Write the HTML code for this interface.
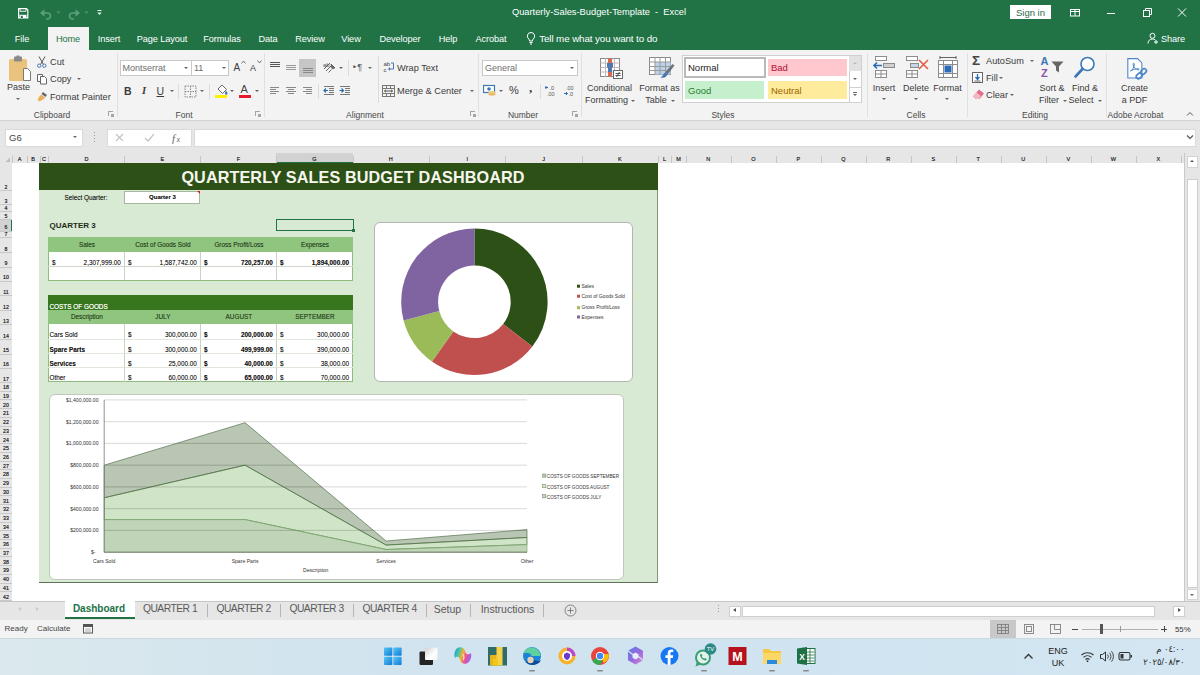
<!DOCTYPE html>
<html><head><meta charset="utf-8"><title>Quarterly-Sales-Budget-Template - Excel</title>
<style>
*{box-sizing:border-box;margin:0;padding:0}
html,body{width:1200px;height:675px;overflow:hidden;background:#fff}
body{font-family:"Liberation Sans","DejaVu Sans",sans-serif;font-size:9px;color:#444;position:relative}
#app{position:absolute;left:0;top:0;width:1200px;height:675px;overflow:hidden;background:#fff}
.abs{position:absolute}
.t{position:absolute;white-space:nowrap;line-height:1}
/* title */
#titlebar{left:0;top:0;width:1200px;height:50px;background:#217346}
.mtab{position:absolute;top:27.700px;height:23px;line-height:23px;color:#fff;font-size:9.2px;letter-spacing:-0.1px;white-space:nowrap;transform:translateX(-50%)}
#hometab{left:48px;top:27px;width:41px;height:24px;background:#f3f3f3}
/* ribbon */
#ribbon{left:0;top:50px;width:1200px;height:71px;background:#f3f3f3;border-bottom:1px solid #d2d2d2}
.rl{position:absolute;white-space:nowrap;font-size:9px;color:#3b3b3b;line-height:1}
.gl{position:absolute;white-space:nowrap;font-size:8.5px;color:#484848;line-height:1;top:110.600px;transform:translateX(-50%)}
.sep{position:absolute;top:53px;height:64px;width:1px;background:#e0e0e0}
/* formula bar */
#fbar{left:0;top:121px;width:1200px;height:32px;background:#e6e6e6}
/* headers */
#colhdr{left:0;top:153px;width:1184px;height:10px;background:#e6e6e6}
#rowhdr{left:0;top:163px;width:12px;height:438px;background:#e6e6e6}
.ch{position:absolute;top:155px;font-size:5.5px;color:#333;text-shadow:0 0 0.400px #444;line-height:8px;transform:translateX(-50%);white-space:nowrap}
.cd{position:absolute;top:156px;height:7px;width:1px;background:#c6c6c6}
.rh{position:absolute;left:0;width:12px;text-align:center;font-size:5.200px;color:#333;line-height:6px;text-shadow:0 0 0.400px #333}
/* bottom */
#tabsbar{left:0;top:601px;width:1200px;height:19px;background:#e6e6e6;border-top:1px solid #c6c6c6}
#status{left:0;top:620px;width:1200px;height:18px;background:#f3f3f3}
#taskbar{left:0;top:638px;width:1200px;height:37px;background:linear-gradient(90deg,#dbe9ec 0%,#d2e4ee 25%,#cfe3f0 60%,#d3e6f2 100%);border-top:1px solid #cbd8df}
.dd{position:absolute;width:0;height:0;border-left:2px solid transparent;border-right:2px solid transparent;border-top:2.500px solid #666}
.lau{position:absolute;top:111px;width:5px;height:5px;border-left:1px solid #a5a5a5;border-top:1px solid #a5a5a5}
.lau:after{content:"";position:absolute;left:2px;top:2px;width:3px;height:3px;background:#a5a5a5}
.box{position:absolute;background:#fff;border:1px solid #c8c8c8}
.sep2{position:absolute;top:84px;height:15px;width:1px;background:#dcdcdc}
.dt{font-size:6.400px;color:#1a1a1a;text-shadow:0 0 0.500px rgba(0,0,0,0.450)}
.tb{position:absolute;white-space:nowrap;line-height:1;font-size:10.500px;color:#5a5a5a;transform:translateX(-50%)}
.tsep{position:absolute;top:604px;width:1px;height:13px;background:#b5b5b5}
</style></head><body><div id="app">

<!-- TITLE BAR -->
<div id="titlebar" class="abs"></div>
<div id="hometab" class="abs"></div>
<!-- quick access -->
<svg class="abs" style="left:14px;top:5px" width="100" height="16" viewBox="0 0 100 16">
  <path d="M4.600 3.600h7.800l1.400 1.400v7.900h-9.200z" fill="none" stroke="#fff" stroke-width="1.200"/>
  <rect x="5.500" y="9.800" width="7" height="3.200" fill="#fff"/><rect x="6.800" y="10.800" width="2" height="2.200" fill="#217346"/>
  <path d="M6 3.500v2.800h6v-2.800" fill="none" stroke="#fff" stroke-width="0.900"/>
  <g fill="none" stroke="#5c9e7c" stroke-width="1.600">
    <path d="M27.500 8h6a3 3 0 0 1 0 6h-1.500"/>
    <path d="M64.500 8h-6a3 3 0 0 0 0 6h1.500"/>
  </g>
  <path d="M26 8l4.500-3.800v7.600z M66 8l-4.500-3.800v7.600z" fill="#5c9e7c"/>
  <path d="M42.500 6.500h4l-2 2.200z M70.500 6.500h4l-2 2.200z" fill="#4f9671"/>
  <path d="M83.500 5.500h4" stroke="#e6f2ea" stroke-width="1"/><path d="M83.300 7.500h4.400l-2.200 2.500z" fill="#e6f2ea"/>
</svg>
<div class="t" style="left:599px;top:8px;transform:translateX(-50%);color:#fff;font-size:9.300px">Quarterly-Sales-Budget-Template &nbsp;-&nbsp; Excel</div>
<div class="abs" style="left:1010px;top:5px;width:41px;height:14px;background:#fff"></div>
<div class="t" style="left:1030.500px;top:7.500px;transform:translateX(-50%);color:#2b6b4a;font-size:9.500px">Sign in</div>
<svg class="abs" style="left:1060px;top:4px" width="140" height="18" viewBox="0 0 140 18">
  <g fill="none" stroke="#fff" stroke-width="1">
    <rect x="10.500" y="5.500" width="9" height="6.500"/><path d="M15 5.500v6.500"/><path d="M10.500 7.500h9"/>
    <path d="M47 9.500h8"/>
    <rect x="83.500" y="6.500" width="6" height="6"/><path d="M85.500 6.500v-2h6v6h-2"/>
    <path d="M118 4.500l8 8M126 4.500l-8 8"/>
  </g>
</svg>
<div class="mtab" style="left:22px">File</div>
<div class="mtab" style="left:68px;color:#217346">Home</div>
<div class="mtab" style="left:109px">Insert</div>
<div class="mtab" style="left:162px">Page Layout</div>
<div class="mtab" style="left:222px">Formulas</div>
<div class="mtab" style="left:268px">Data</div>
<div class="mtab" style="left:310px">Review</div>
<div class="mtab" style="left:351px">View</div>
<div class="mtab" style="left:400px">Developer</div>
<div class="mtab" style="left:448px">Help</div>
<div class="mtab" style="left:491px">Acrobat</div>
<svg class="abs" style="left:525px;top:31px" width="12" height="15" viewBox="0 0 12 15"><g fill="none" stroke="#fff" stroke-width="1"><path d="M6 1.500a3.600 3.600 0 0 1 2.200 6.500c-.6.600-.7 1.200-.7 2h-3c0-.8-.1-1.400-.7-2a3.600 3.600 0 0 1 2.200-6.500z"/><path d="M4.500 11.500h3M5 13h2"/></g></svg>
<div class="mtab" style="left:598.300px;top:27.400px;font-size:9.800px">Tell me what you want to do</div>
<svg class="abs" style="left:1147px;top:32px" width="12" height="13" viewBox="0 0 12 13"><g fill="none" stroke="#fff" stroke-width="1"><circle cx="5.500" cy="3.800" r="2.500"/><path d="M1 11.500c0-3 2-4.500 4.500-4.500 1 0 2 .3 2.700.9"/><path d="M7 10h4M9 8v4"/></g></svg>
<div class="mtab" style="left:1173px">Share</div>

<!-- RIBBON -->
<div id="ribbon" class="abs"></div>
<!-- Clipboard -->
<svg class="abs" style="left:6px;top:54.500px" width="28" height="30" viewBox="0 0 28 30">
  <rect x="3" y="4" width="18" height="22" rx="1.500" fill="#e9c27c"/>
  <rect x="8" y="1.500" width="8" height="5" rx="1" fill="#8a8a8a"/><rect x="10.500" y="0.500" width="3" height="2.500" fill="#8a8a8a"/>
  <path d="M17.500 13.500h4l3 3v9h-7z" fill="#fff" stroke="#7a7a7a" stroke-width="1"/>
</svg>
<div class="rl" style="left:18.500px;top:83px;transform:translateX(-50%);font-size:9px">Paste</div>
<div class="dd" style="left:16px;top:98px"></div>
<svg class="abs" style="left:36px;top:56px" width="12" height="12" viewBox="0 0 12 12"><g fill="none" stroke="#555" stroke-width="1"><path d="M3 0.500l4.500 8M9 0.500l-4.500 8"/><circle cx="3.200" cy="9.700" r="1.700" stroke="#4a7ab5"/><circle cx="8.300" cy="9.700" r="1.700" stroke="#4a7ab5"/></g></svg>
<div class="rl" style="left:50px;top:57.700px;font-size:9.200px">Cut</div>
<svg class="abs" style="left:36px;top:73px" width="12" height="12" viewBox="0 0 12 12"><g fill="#fff" stroke="#666" stroke-width="1"><path d="M1.500 1.500h5v7h-5z"/><path d="M4.500 3.500h4l2 2v5.500h-6z"/></g></svg>
<div class="rl" style="left:50px;top:75px;font-size:9.200px">Copy</div>
<div class="dd" style="left:77px;top:78px"></div>
<svg class="abs" style="left:36px;top:91px" width="13" height="12" viewBox="0 0 13 12"><path d="M7 1l4 3-1.500 2-4-3z" fill="#666"/><path d="M5 3.500l4 3-1 1.500-4.500 2.500-2-1.500 1.500-3z" fill="#e9b35e"/></svg>
<div class="rl" style="left:50px;top:93px;font-size:9.200px">Format Painter</div>
<div class="gl" style="left:52px">Clipboard</div>
<div class="lau" style="left:108px"></div>
<div class="sep" style="left:117px"></div>
<!-- Font -->
<div class="box" style="left:120px;top:60px;width:72px;height:16px"></div>
<div class="box" style="left:191px;top:60px;width:38px;height:16px"></div>
<div class="rl" style="left:122.500px;top:64px;color:#6e6e6e">Montserrat</div>
<div class="rl" style="left:194px;top:64px;color:#6e6e6e">11</div>
<div class="dd" style="left:184px;top:67px"></div><div class="dd" style="left:222px;top:67px"></div>
<div class="rl" style="left:233.500px;top:63px;font-size:10px">A</div><svg class="abs" style="left:241px;top:60px" width="5" height="4"><path d="M0.500 3.500l2-2.500 2 2.500" fill="none" stroke="#555" stroke-width="0.800"/></svg>
<div class="rl" style="left:250px;top:64px;font-size:9px">A</div><svg class="abs" style="left:257px;top:60px" width="5" height="4"><path d="M0.500 0.500l2 2.500 2-2.500" fill="none" stroke="#555" stroke-width="0.800"/></svg>
<div class="rl" style="left:124px;top:86px;font-size:10.500px;font-weight:bold">B</div>
<div class="rl" style="left:142px;top:86px;font-size:10.500px;font-style:italic;font-weight:bold;font-family:'Liberation Serif',serif">I</div>
<div class="rl" style="left:156.500px;top:86px;font-size:10.500px;text-decoration:underline">U</div>
<div class="dd" style="left:170px;top:90px"></div>
<div class="sep2" style="left:178px"></div>
<svg class="abs" style="left:184px;top:85px" width="13" height="13" viewBox="0 0 13 13"><g fill="none" stroke="#888" stroke-width="1" stroke-dasharray="1.500 1"><rect x="1" y="1" width="11" height="11"/><path d="M6.500 1v11M1 6.500h11"/></g></svg>
<div class="dd" style="left:200px;top:90px"></div>
<div class="sep2" style="left:209px"></div>
<svg class="abs" style="left:214px;top:83px" width="15" height="16" viewBox="0 0 15 16"><path d="M4 6l4-4 4.500 4.500-4 4z" fill="#fff" stroke="#666" stroke-width="1"/><path d="M12 7.500c1 1.500 1.500 2.300 1.500 3a1.300 1.300 0 0 1-2.600 0c0-.7.400-1.500 1.100-3z" fill="#4a7ab5"/><rect x="1" y="12" width="12" height="3" fill="#ffef00"/></svg>
<div class="dd" style="left:230px;top:90px"></div>
<div class="rl" style="left:240.500px;top:84px;font-size:11px;color:#444">A</div>
<div class="abs" style="left:239px;top:95px;width:12px;height:3px;background:#e8192c"></div>
<div class="dd" style="left:255px;top:90px"></div>
<div class="gl" style="left:184px">Font</div>
<div class="lau" style="left:255px"></div>
<div class="sep" style="left:264px"></div>

<!-- Alignment -->
<div class="abs" style="left:299px;top:59px;width:17px;height:18px;background:#c6c6c6"></div>
<div class="abs" style="left:270px;top:62px;width:10px;height:1px;background:#555"></div><div class="abs" style="left:270px;top:64px;width:10px;height:1px;background:#555"></div><div class="abs" style="left:270px;top:66px;width:10px;height:1px;background:#555"></div>
<div class="abs" style="left:286px;top:65px;width:10px;height:1px;background:#999"></div><div class="abs" style="left:286px;top:67px;width:10px;height:1px;background:#999"></div><div class="abs" style="left:286px;top:69px;width:10px;height:1px;background:#999"></div>
<div class="abs" style="left:303px;top:68px;width:10px;height:1px;background:#888"></div><div class="abs" style="left:303px;top:70px;width:10px;height:1px;background:#888"></div><div class="abs" style="left:303px;top:72px;width:10px;height:1px;background:#888"></div>
<svg class="abs" style="left:322.500px;top:60px" width="14" height="14" viewBox="0 0 14 14"><g fill="none" stroke="#666" stroke-width="1"><path d="M1 9l6-6"/><path d="M3 11l6-6"/><path d="M5.500 12.500l3-3"/><path d="M8 4l4 4-3 .5z" fill="#666"/></g><text x="0" y="7" font-size="6" font-family="Liberation Sans, sans-serif" fill="#555">ab</text></svg>
<div class="dd" style="left:338.500px;top:67px"></div><div class="abs" style="left:348px;top:60px;width:1px;height:16px;background:#dcdcdc"></div>
<div class="rl" style="left:352px;top:63px;font-size:9px;color:#555">&#8227;&#182;</div><div class="dd" style="left:368px;top:67px"></div>
<div class="abs" style="left:378px;top:56px;width:1px;height:47px;background:#dcdcdc"></div>
<svg class="abs" style="left:383px;top:60px" width="13" height="14" viewBox="0 0 13 14"><text x="0.500" y="5.500" font-size="6" font-family="Liberation Sans, sans-serif" fill="#444">ab</text><text x="0.500" y="12" font-size="6" font-family="Liberation Sans, sans-serif" fill="#444">c</text><path d="M8 3h2.500v6h-4.500" fill="none" stroke="#4a7ab5" stroke-width="1"/><path d="M7 7l-2 2 2 2z" fill="#4a7ab5"/></svg>
<div class="rl" style="left:397px;top:63.500px;font-size:9.200px">Wrap Text</div>
<div class="abs" style="left:270px;top:87px;width:9px;height:1px;background:#888"></div><div class="abs" style="left:270px;top:89px;width:6px;height:1px;background:#888"></div><div class="abs" style="left:270px;top:91px;width:9px;height:1px;background:#888"></div><div class="abs" style="left:270px;top:93px;width:6px;height:1px;background:#888"></div>
<div class="abs" style="left:286px;top:87px;width:10px;height:1px;background:#888"></div><div class="abs" style="left:288px;top:89px;width:6px;height:1px;background:#888"></div><div class="abs" style="left:286px;top:91px;width:10px;height:1px;background:#888"></div><div class="abs" style="left:288px;top:93px;width:6px;height:1px;background:#888"></div>
<div class="abs" style="left:303px;top:87px;width:9px;height:1px;background:#888"></div><div class="abs" style="left:306px;top:89px;width:6px;height:1px;background:#888"></div><div class="abs" style="left:303px;top:91px;width:9px;height:1px;background:#888"></div><div class="abs" style="left:306px;top:93px;width:6px;height:1px;background:#888"></div>
<div class="sep2" style="left:318px"></div>
<svg class="abs" style="left:323px;top:85px" width="30" height="12" viewBox="0 0 30 12"><g stroke="#777" stroke-width="1"><path d="M1 1.500h10M6 3.500h5M6 5.500h5M6 7.500h5M1 9.500h10"/><path d="M17 1.500h10M22 3.500h5M22 5.500h5M22 7.500h5M17 9.500h10"/></g><path d="M5 5.500h-4M3 3.500l-2 2 2 2" stroke="#2b6cb8" stroke-width="1.200" fill="none"/><path d="M16.500 5.500h4M18.500 3.500l2 2-2 2" stroke="#2b6cb8" stroke-width="1.200" fill="none"/></svg>
<svg class="abs" style="left:382px;top:84px" width="13" height="14" viewBox="0 0 13 14"><g fill="none" stroke="#777" stroke-width="1"><rect x="0.500" y="1.500" width="12" height="11"/><path d="M0.500 4.500h12M0.500 9.500h12M4.500 1.500v3M8.500 1.500v3M4.500 9.500v3M8.500 9.500v3"/><path d="M2.500 7h8M4 5.800l-1.500 1.200 1.500 1.200M9 5.800l1.500 1.200-1.500 1.200" stroke="#555"/></g></svg>
<div class="rl" style="left:397px;top:86.500px;font-size:9.200px">Merge &amp; Center</div><div class="dd" style="left:470px;top:90px"></div>
<div class="gl" style="left:365px">Alignment</div><div class="lau" style="left:470px"></div><div class="sep" style="left:478px"></div>
<!-- Number -->
<div class="box" style="left:482px;top:60px;width:96px;height:16px"></div><div class="rl" style="left:485px;top:64px;color:#6e6e6e">General</div><div class="dd" style="left:570px;top:67px"></div>
<svg class="abs" style="left:483px;top:84px" width="14" height="13" viewBox="0 0 14 13"><rect x="0.500" y="1.500" width="11" height="7" fill="#fff" stroke="#3c78b4" stroke-width="1.200"/><circle cx="6" cy="5" r="1.800" fill="#3c78b4"/><ellipse cx="9" cy="10" rx="3.500" ry="1.500" fill="#e9b35e"/><ellipse cx="9" cy="8.500" rx="3.500" ry="1.500" fill="#f0c878"/></svg>
<div class="dd" style="left:499px;top:90px"></div><div class="rl" style="left:509px;top:85px;font-size:11px">%</div><div class="rl" style="left:529px;top:81px;font-size:13px;font-weight:bold;font-family:'Liberation Serif',serif">,</div>
<div class="sep2" style="left:540px"></div>
<svg class="abs" style="left:545px;top:84px" width="32" height="14" viewBox="0 0 32 14"><g font-family="Liberation Sans, sans-serif" font-size="5.500" fill="#555"><text x="4.500" y="5.500">.0</text><text x="2" y="11.500">.00</text><text x="21" y="5.500">.00</text><text x="23.500" y="11.500">.0</text></g><path d="M0 3.500h3M1.500 2l-1.500 1.500 1.500 1.500" stroke="#2b6cb8" fill="none"/><path d="M19 9.500h3.500M21 8l1.500 1.500-1.500 1.500" stroke="#2b6cb8" fill="none"/></svg>
<div class="gl" style="left:523px">Number</div><div class="lau" style="left:572px"></div><div class="sep" style="left:581px"></div>
<!-- STYLES -->
<svg class="abs" style="left:599.500px;top:57.500px" width="24" height="22" viewBox="0 0 24 22">
  <rect x="0.500" y="0.500" width="19" height="18" fill="#fff" stroke="#8a8a8a"/>
  <path d="M0.500 5h19M0.500 9.500h19M0.500 14h19M5.500 0.500v18M14.500 0.500v18" stroke="#c4b8b8" fill="none"/>
  <rect x="8" y="0.500" width="4" height="18" fill="#d9694a"/><rect x="7" y="5" width="6" height="4.500" fill="#4a7ab5"/><rect x="8" y="9.500" width="4" height="4.500" fill="#4a7ab5"/>
  <rect x="13.500" y="12.500" width="9" height="8" fill="#fff" stroke="#666"/><path d="M15.500 15.500h5M15.500 17.500h5M19.500 14l-3 5" stroke="#444" stroke-width="0.900" fill="none"/>
</svg>
<div class="rl" style="left:609.500px;top:83.500px;transform:translateX(-50%)">Conditional</div>
<div class="rl" style="left:606.500px;top:96px;transform:translateX(-50%)">Formatting</div><div class="dd" style="left:631px;top:100px"></div>
<svg class="abs" style="left:648.500px;top:57px" width="26" height="23" viewBox="0 0 26 23">
  <rect x="0.500" y="0.500" width="21" height="17" fill="#fff" stroke="#8a8a8a"/>
  <rect x="6" y="5" width="15.500" height="12.500" fill="#bcd2ea"/>
  <path d="M0.500 5h21M0.500 9.500h21M0.500 13.500h21M6 0.500v17M11 0.500v17M16.500 0.500v17" stroke="#9a9a9a" fill="none"/>
  <path d="M23.500 7l2 1.500-7 9-2.500-2z" fill="#6a7480"/><path d="M16 15.500l2.500 2c-1 2.500-4 4-7 3 2-1 2.500-3 4.500-5z" fill="#3c78b4"/>
</svg>
<div class="rl" style="left:659.500px;top:83.500px;transform:translateX(-50%)">Format as</div>
<div class="rl" style="left:656px;top:96px;transform:translateX(-50%)">Table</div><div class="dd" style="left:671px;top:100px"></div>
<div class="abs" style="left:682px;top:55px;width:180px;height:48px;background:#fff;border:1px solid #d0d0d0"></div>
<div class="abs" style="left:684px;top:57px;width:82px;height:21px;background:#fff;border:2px solid #b9b9b9"></div>
<div class="abs" style="left:768px;top:59px;width:79px;height:17px;background:#ffc7ce"></div>
<div class="abs" style="left:685px;top:81px;width:79px;height:18px;background:#c6efce"></div>
<div class="abs" style="left:768px;top:81px;width:79px;height:18px;background:#ffeb9c"></div>
<div class="rl" style="left:688px;top:63px;font-size:9.500px;color:#222">Normal</div>
<div class="rl" style="left:771px;top:63px;font-size:9.500px;color:#b01030">Bad</div>
<div class="rl" style="left:688px;top:85.500px;font-size:9.500px;color:#2a7d32">Good</div>
<div class="rl" style="left:771px;top:85.500px;font-size:9.500px;color:#9c6500">Neutral</div>
<div class="abs" style="left:849px;top:56px;width:12px;height:15px;background:#e1e1e1"></div>
<div class="abs" style="left:849px;top:71px;width:12px;height:31px;border-left:1px solid #d0d0d0"></div>
<div class="abs" style="left:849px;top:87px;width:12px;height:1px;background:#d0d0d0"></div>
<div class="dd" style="left:853px;top:62px;border-top:none;border-bottom:2.500px solid #bbb"></div>
<div class="dd" style="left:853px;top:78px"></div>
<div class="abs" style="left:853px;top:92px;width:4px;height:1px;background:#666"></div><div class="dd" style="left:853px;top:94px"></div>
<div class="gl" style="left:723px">Styles</div><div class="sep" style="left:867px"></div>
<!-- CELLS -->
<svg class="abs" style="left:872px;top:55px" width="90" height="24" viewBox="0 0 90 24">
  <g fill="#fff" stroke="#8c8c8c" stroke-width="1">
    <rect x="3.500" y="1.500" width="11" height="4"/><rect x="11.500" y="8.500" width="11" height="4" fill="#d0d0d0"/><rect x="3.500" y="15.500" width="11" height="7"/><path d="M9 15.500v7M3.500 19h11"/>
    <rect x="34.500" y="1.500" width="11" height="4"/><rect x="38.500" y="8.500" width="8" height="4" fill="#c5d5e8"/><rect x="34.500" y="15.500" width="11" height="7"/><path d="M40 15.500v7M34.500 19h11"/>
    <rect x="66.500" y="5.500" width="19" height="17"/><path d="M66.500 9.500h19M66.500 18.500h19M71.500 5.500v17M80.500 5.500v17"/>
  </g>
  <rect x="72.500" y="10.500" width="7" height="7" fill="#2b6cb8"/>
  <path d="M68 2.500h16M68 1v3M84 1v3" stroke="#555" fill="none" stroke-width="0.900"/>
  <path d="M10 10.500h-8M5 7.500l-3 3 3 3" stroke="#2b6cb8" stroke-width="1.600" fill="none"/>
  <path d="M47 5l9 9M56 5l-9 9" stroke="#e2583e" stroke-width="1.500" fill="none"/>
</svg>
<div class="rl" style="left:884px;top:83.600px;transform:translateX(-50%)">Insert</div>
<div class="rl" style="left:916px;top:83.600px;transform:translateX(-50%)">Delete</div>
<div class="rl" style="left:947.500px;top:83.600px;transform:translateX(-50%)">Format</div>
<div class="dd" style="left:882px;top:98px"></div><div class="dd" style="left:914px;top:98px"></div><div class="dd" style="left:945px;top:98px"></div>
<div class="gl" style="left:916px">Cells</div><div class="sep" style="left:967px"></div>
<!-- EDITING -->
<div class="rl" style="left:972px;top:54px;font-size:13.500px;font-weight:bold;color:#444">&#931;</div>
<div class="rl" style="left:986px;top:57px;font-size:9.200px">AutoSum</div><div class="dd" style="left:1030px;top:60px"></div>
<svg class="abs" style="left:972px;top:72px" width="12" height="12" viewBox="0 0 12 12"><rect x="0.500" y="0.500" width="10" height="10" fill="#fff" stroke="#666"/><path d="M5.500 2v5M3.500 5l2 2.500 2-2.500" stroke="#2b6cb8" stroke-width="1.300" fill="none"/><path d="M2.500 9h6" stroke="#666"/></svg>
<div class="rl" style="left:986px;top:73.500px;font-size:9.200px">Fill</div><div class="dd" style="left:999px;top:77px"></div>
<svg class="abs" style="left:972px;top:89px" width="13" height="11" viewBox="0 0 13 11"><path d="M7 0.500l5 4-4.500 5.500h-3.500l-3-2.500z" fill="#e46c88"/><path d="M1 7.500l3.500-4 4.500 3.500-2 3h-3z" fill="#f4b8c5"/></svg>
<div class="rl" style="left:986px;top:90.500px;font-size:9.200px">Clear</div><div class="dd" style="left:1010px;top:94px"></div>
<svg class="abs" style="left:1039px;top:55px" width="28" height="24" viewBox="0 0 28 24"><text x="1.500" y="10" font-size="11" font-weight="bold" font-family="Liberation Sans, sans-serif" fill="#3c78b4">A</text><text x="2" y="21.500" font-size="11" font-weight="bold" font-family="Liberation Sans, sans-serif" fill="#8a55a8">Z</text><path d="M12.500 6.500h12l-4.500 5v6l-3 -2v-4z" fill="#666"/></svg>
<div class="rl" style="left:1052px;top:83.600px;transform:translateX(-50%)">Sort &amp;</div>
<div class="rl" style="left:1049px;top:96px;transform:translateX(-50%)">Filter</div><div class="dd" style="left:1063px;top:100px"></div>
<svg class="abs" style="left:1072px;top:55px" width="26" height="24" viewBox="0 0 26 24"><circle cx="15.500" cy="9" r="6.500" fill="#fff" stroke="#3c78b4" stroke-width="1.600"/><path d="M10.500 14l-7 7.500" stroke="#3c78b4" stroke-width="2.600" stroke-linecap="round"/></svg>
<div class="rl" style="left:1085px;top:83.600px;transform:translateX(-50%)">Find &amp;</div>
<div class="rl" style="left:1081px;top:96px;transform:translateX(-50%)">Select</div><div class="dd" style="left:1098px;top:100px"></div>
<div class="gl" style="left:1035px">Editing</div><div class="sep" style="left:1106px"></div>
<!-- ADOBE -->
<svg class="abs" style="left:1124px;top:56.500px" width="26" height="27" viewBox="0 0 24 25"><path d="M3.500 1.500h9l4 4v14h-13z" fill="#fff" stroke="#4a86c8" stroke-width="1"/><path d="M6 13c2-1 3.500-4 3.500-6.500 0-1-1.200-1-1.200 0 0 2.500 2.500 5.500 5 5.500 1 0 1-1.200 0-1.200-2.500 0-5.500 1-7.300 2.200z" fill="none" stroke="#4a86c8" stroke-width="0.900"/><g fill="none" stroke="#4a86c8" stroke-width="1.500"><rect x="11" y="15.500" width="6" height="4" rx="2" transform="rotate(-45 14 17.500)"/><rect x="15" y="11.500" width="6" height="4" rx="2" transform="rotate(-45 18 13.500)"/></g></svg>
<div class="rl" style="left:1134.500px;top:83.600px;transform:translateX(-50%)">Create</div>
<div class="rl" style="left:1134.500px;top:96px;transform:translateX(-50%)">a PDF</div>
<div class="gl" style="left:1135.500px">Adobe Acrobat</div>
<svg class="abs" style="left:1186px;top:111px" width="8" height="6"><path d="M1 4.500l3-3 3 3" fill="none" stroke="#555" stroke-width="1"/></svg>
<!-- FORMULA BAR -->
<div id="fbar" class="abs"></div>
<div class="abs" style="left:4.500px;top:128.500px;width:78.500px;height:18px;background:#fff;border:1px solid #dadada"></div>
<div class="rl" style="left:9px;top:133px;font-size:9.500px;color:#444">G6</div>
<div class="dd" style="left:73px;top:136px"></div>
<div class="abs" style="left:94px;top:132px;width:1px;height:1px;background:#999;box-shadow:0 3px 0 #999,0 6px 0 #999,0 9px 0 #999"></div>
<div class="abs" style="left:106.500px;top:128.500px;width:85px;height:18px;background:#fff;border:1px solid #dadada"></div>
<svg class="abs" style="left:112px;top:131px" width="76" height="14" viewBox="0 0 76 14"><path d="M4 3l7 7M11 3l-7 7" stroke="#c4c4c4" stroke-width="1.200" fill="none"/><path d="M33 7l3 3 6-7" stroke="#c4c4c4" stroke-width="1.200" fill="none"/><text x="60" y="10.500" font-size="11" font-style="italic" font-family="Liberation Serif, serif" fill="#666">f</text><text x="64.500" y="11" font-size="8" font-style="italic" font-family="Liberation Serif, serif" fill="#666">x</text></svg>
<div class="abs" style="left:194px;top:128.500px;width:1002px;height:18px;background:#fff;border:1px solid #dadada"></div>
<svg class="abs" style="left:1186px;top:134px" width="8" height="6"><path d="M1 1.500l3 3 3-3" fill="none" stroke="#555" stroke-width="1.200"/></svg>

<!-- HEADERS -->
<div id="colhdr" class="abs"></div>
<div class="abs" style="left:276px;top:153px;width:77px;height:10px;background:#d2d2d2;border-bottom:1px solid #217346"></div>
<svg class="abs" style="left:5px;top:157px" width="6" height="6"><path d="M5 0.500v4.500h-4.500z" fill="#bdbdbd"/></svg>
<div class="ch" style="left:19.7px">A</div><div class="cd" style="left:27.0px"></div><div class="ch" style="left:33.2px">B</div><div class="cd" style="left:39.5px"></div><div class="ch" style="left:44.0px">C</div><div class="cd" style="left:48.4px"></div><div class="ch" style="left:86.4px">D</div><div class="cd" style="left:124.4px"></div><div class="ch" style="left:162.4px">E</div><div class="cd" style="left:200.4px"></div><div class="ch" style="left:238.4px">F</div><div class="cd" style="left:276.4px"></div><div class="ch" style="left:314.5px">G</div><div class="cd" style="left:352.6px"></div><div class="ch" style="left:390.8px">H</div><div class="cd" style="left:429.0px"></div><div class="ch" style="left:467.2px">I</div><div class="cd" style="left:505.4px"></div><div class="ch" style="left:543.6px">J</div><div class="cd" style="left:581.8px"></div><div class="ch" style="left:619.8px">K</div><div class="cd" style="left:657.8px"></div><div class="ch" style="left:664.5px">L</div><div class="cd" style="left:671.2px"></div><div class="ch" style="left:678.5px">M</div><div class="cd" style="left:685.8px"></div><div class="ch" style="left:708.3px">N</div><div class="cd" style="left:730.8px"></div><div class="ch" style="left:753.3px">O</div><div class="cd" style="left:775.8px"></div><div class="ch" style="left:798.3px">P</div><div class="cd" style="left:820.8px"></div><div class="ch" style="left:843.3px">Q</div><div class="cd" style="left:865.8px"></div><div class="ch" style="left:888.3px">R</div><div class="cd" style="left:910.8px"></div><div class="ch" style="left:933.3px">S</div><div class="cd" style="left:955.8px"></div><div class="ch" style="left:978.3px">T</div><div class="cd" style="left:1000.8px"></div><div class="ch" style="left:1023.3px">U</div><div class="cd" style="left:1045.8px"></div><div class="ch" style="left:1068.3px">V</div><div class="cd" style="left:1090.8px"></div><div class="ch" style="left:1113.3px">W</div><div class="cd" style="left:1135.8px"></div><div class="ch" style="left:1158.3px">X</div><div class="cd" style="left:1180.8px"></div><div class="cd" style="left:12px"></div>
<div id="rowhdr" class="abs"></div>
<div class="abs" style="left:0;top:219px;width:12px;height:12px;background:#d2d2d2;border-right:1px solid #217346"></div>
<div class="rh" style="top:183.5px">2</div><div class="abs" style="left:0;top:190.0px;width:12px;height:1px;background:#c8c8c8"></div><div class="rh" style="top:197.5px">3</div><div class="abs" style="left:0;top:204.0px;width:12px;height:1px;background:#c8c8c8"></div><div class="rh" style="top:204.5px">4</div><div class="abs" style="left:0;top:211.0px;width:12px;height:1px;background:#c8c8c8"></div><div class="rh" style="top:212.8px">5</div><div class="abs" style="left:0;top:219.3px;width:12px;height:1px;background:#c8c8c8"></div><div class="rh" style="top:224.2px">6</div><div class="abs" style="left:0;top:230.7px;width:12px;height:1px;background:#c8c8c8"></div><div class="rh" style="top:230.5px">7</div><div class="abs" style="left:0;top:237.0px;width:12px;height:1px;background:#c8c8c8"></div><div class="rh" style="top:245.9px">8</div><div class="abs" style="left:0;top:252.4px;width:12px;height:1px;background:#c8c8c8"></div><div class="rh" style="top:260.1px">9</div><div class="abs" style="left:0;top:266.6px;width:12px;height:1px;background:#c8c8c8"></div><div class="rh" style="top:274.1px">10</div><div class="abs" style="left:0;top:280.6px;width:12px;height:1px;background:#c8c8c8"></div><div class="rh" style="top:288.5px">11</div><div class="abs" style="left:0;top:295.0px;width:12px;height:1px;background:#c8c8c8"></div><div class="rh" style="top:303.5px">12</div><div class="abs" style="left:0;top:310.0px;width:12px;height:1px;background:#c8c8c8"></div><div class="rh" style="top:317.7px">13</div><div class="abs" style="left:0;top:324.2px;width:12px;height:1px;background:#c8c8c8"></div><div class="rh" style="top:332.5px">14</div><div class="abs" style="left:0;top:339.0px;width:12px;height:1px;background:#c8c8c8"></div><div class="rh" style="top:347.0px">15</div><div class="abs" style="left:0;top:353.5px;width:12px;height:1px;background:#c8c8c8"></div><div class="rh" style="top:361.1px">16</div><div class="abs" style="left:0;top:367.6px;width:12px;height:1px;background:#c8c8c8"></div><div class="rh" style="top:375.5px">17</div><div class="abs" style="left:0;top:382.0px;width:12px;height:1px;background:#c8c8c8"></div><div class="rh" style="top:384.2px">18</div><div class="abs" style="left:0;top:390.7px;width:12px;height:1px;background:#c8c8c8"></div><div class="rh" style="top:392.9px">19</div><div class="abs" style="left:0;top:399.4px;width:12px;height:1px;background:#c8c8c8"></div><div class="rh" style="top:401.7px">20</div><div class="abs" style="left:0;top:408.2px;width:12px;height:1px;background:#c8c8c8"></div><div class="rh" style="top:410.4px">21</div><div class="abs" style="left:0;top:416.9px;width:12px;height:1px;background:#c8c8c8"></div><div class="rh" style="top:419.1px">22</div><div class="abs" style="left:0;top:425.6px;width:12px;height:1px;background:#c8c8c8"></div><div class="rh" style="top:427.8px">23</div><div class="abs" style="left:0;top:434.3px;width:12px;height:1px;background:#c8c8c8"></div><div class="rh" style="top:436.5px">24</div><div class="abs" style="left:0;top:443.0px;width:12px;height:1px;background:#c8c8c8"></div><div class="rh" style="top:445.3px">25</div><div class="abs" style="left:0;top:451.8px;width:12px;height:1px;background:#c8c8c8"></div><div class="rh" style="top:454.0px">26</div><div class="abs" style="left:0;top:460.5px;width:12px;height:1px;background:#c8c8c8"></div><div class="rh" style="top:462.7px">27</div><div class="abs" style="left:0;top:469.2px;width:12px;height:1px;background:#c8c8c8"></div><div class="rh" style="top:471.4px">28</div><div class="abs" style="left:0;top:477.9px;width:12px;height:1px;background:#c8c8c8"></div><div class="rh" style="top:480.1px">29</div><div class="abs" style="left:0;top:486.6px;width:12px;height:1px;background:#c8c8c8"></div><div class="rh" style="top:488.9px">30</div><div class="abs" style="left:0;top:495.4px;width:12px;height:1px;background:#c8c8c8"></div><div class="rh" style="top:497.6px">31</div><div class="abs" style="left:0;top:504.1px;width:12px;height:1px;background:#c8c8c8"></div><div class="rh" style="top:506.3px">32</div><div class="abs" style="left:0;top:512.8px;width:12px;height:1px;background:#c8c8c8"></div><div class="rh" style="top:515.0px">33</div><div class="abs" style="left:0;top:521.5px;width:12px;height:1px;background:#c8c8c8"></div><div class="rh" style="top:523.7px">34</div><div class="abs" style="left:0;top:530.2px;width:12px;height:1px;background:#c8c8c8"></div><div class="rh" style="top:532.5px">35</div><div class="abs" style="left:0;top:539.0px;width:12px;height:1px;background:#c8c8c8"></div><div class="rh" style="top:541.2px">36</div><div class="abs" style="left:0;top:547.7px;width:12px;height:1px;background:#c8c8c8"></div><div class="rh" style="top:549.9px">37</div><div class="abs" style="left:0;top:556.4px;width:12px;height:1px;background:#c8c8c8"></div><div class="rh" style="top:558.6px">38</div><div class="abs" style="left:0;top:565.1px;width:12px;height:1px;background:#c8c8c8"></div><div class="rh" style="top:567.3px">39</div><div class="abs" style="left:0;top:573.8px;width:12px;height:1px;background:#c8c8c8"></div><div class="rh" style="top:576.1px">40</div><div class="abs" style="left:0;top:582.6px;width:12px;height:1px;background:#c8c8c8"></div><div class="rh" style="top:584.8px">41</div><div class="abs" style="left:0;top:591.3px;width:12px;height:1px;background:#c8c8c8"></div><div class="rh" style="top:593.5px">42</div><div class="abs" style="left:0;top:600.0px;width:12px;height:1px;background:#c8c8c8"></div>

<!-- SHEET -->
<div id="sheet" class="abs" style="left:12px;top:163px;width:1172px;height:438px;background:#fff"></div>

<!-- DASHBOARD -->
<div class="abs" style="left:39px;top:163px;width:619px;height:420px;background:#d8ead3;border-right:1px solid #7f9a76;border-bottom:1px solid #5f6f5a"></div>
<div class="abs" style="left:39px;top:163px;width:619px;height:27px;background:#2d5016"></div>
<div class="t" style="left:353px;top:168.800px;transform:translateX(-50%);color:#f6f6ee;font-weight:bold;font-size:16.200px;letter-spacing:0.100px">QUARTERLY SALES BUDGET DASHBOARD</div>
<div class="t dt" style="left:86px;top:194.600px;transform:translateX(-50%)">Select Quarter:</div>
<div class="abs" style="left:124.400px;top:190.500px;width:76px;height:13.500px;background:#fff;border:1px solid #a8b8a0"></div>
<svg class="abs" style="left:197px;top:191px" width="3" height="3"><path d="M0 0h3v3z" fill="#d22"/></svg>
<div class="t dt" style="left:162.400px;top:194px;transform:translateX(-50%);font-weight:bold;font-size:6px">Quarter 3</div>
<div class="t" style="left:49.500px;top:221.500px;font-weight:bold;font-size:8px;color:#1e2a18">QUARTER 3</div>
<div class="abs" style="left:276px;top:219px;width:78px;height:12px;border:1.500px solid #217346"></div>
<div class="abs" style="left:352px;top:229px;width:3px;height:3px;background:#217346"></div>
<div class="abs" style="left:48.400px;top:237px;width:304.600px;height:44px;background:#fff;border:1px solid #8fba80"></div>
<div class="abs" style="left:48.400px;top:237px;width:304.600px;height:15.400px;background:#8fc57e"></div>
<div class="abs" style="left:48.400px;top:266.300px;width:304.600px;height:1px;background:#cfd8cb"></div>
<div class="abs" style="left:124.4px;top:252.400px;width:1px;height:28px;background:#c9d2c5"></div><div class="abs" style="left:200.4px;top:252.400px;width:1px;height:28px;background:#c9d2c5"></div><div class="abs" style="left:276.4px;top:252.400px;width:1px;height:28px;background:#c9d2c5"></div>
<div class="t dt" style="left:86.9px;top:242px;transform:translateX(-50%);color:#2c4a22">Sales</div><div class="t dt" style="left:51.9px;top:260.200px">$</div><div class="t dt" style="right:1079.1px;top:260.200px">2,307,999.00</div>
<div class="t dt" style="left:162.9px;top:242px;transform:translateX(-50%);color:#2c4a22">Cost of Goods Sold</div><div class="t dt" style="left:127.9px;top:260.200px">$</div><div class="t dt" style="right:1003.1px;top:260.200px">1,587,742.00</div>
<div class="t dt" style="left:238.9px;top:242px;transform:translateX(-50%);color:#2c4a22">Gross Profit/Loss</div><div class="t dt" style="left:203.9px;top:260.200px;font-weight:bold">$</div><div class="t dt" style="right:927.1px;top:260.200px;font-weight:bold">720,257.00</div>
<div class="t dt" style="left:315.0px;top:242px;transform:translateX(-50%);color:#2c4a22">Expenses</div><div class="t dt" style="left:279.9px;top:260.200px;font-weight:bold">$</div><div class="t dt" style="right:850.9px;top:260.200px;font-weight:bold">1,894,000.00</div>
<div class="abs" style="left:48.400px;top:295px;width:304.600px;height:87px;background:#fff;border:1px solid #8fba80"></div>
<div class="abs" style="left:48.400px;top:295px;width:304.600px;height:15.200px;background:#38761d"></div>
<div class="abs" style="left:48.400px;top:310.200px;width:304.600px;height:14px;background:#8fc57e"></div>
<div class="t dt" style="left:49.500px;top:303.800px;color:#f2f8ee;text-shadow:0 0 0.400px #fff">COSTS OF GOODS</div>
<div class="abs" style="left:124.4px;top:324px;width:1px;height:58px;background:#c9d2c5"></div><div class="abs" style="left:200.4px;top:324px;width:1px;height:58px;background:#c9d2c5"></div><div class="abs" style="left:276.4px;top:324px;width:1px;height:58px;background:#c9d2c5"></div><div class="abs" style="left:48.400px;top:338.8px;width:304.600px;height:1px;background:#dfe6dc"></div><div class="abs" style="left:48.400px;top:353.2px;width:304.600px;height:1px;background:#dfe6dc"></div><div class="abs" style="left:48.400px;top:367.4px;width:304.600px;height:1px;background:#dfe6dc"></div>
<div class="t dt" style="left:86.9px;top:313.900px;transform:translateX(-50%);color:#2c4a22">Description</div><div class="t dt" style="left:162.9px;top:313.900px;transform:translateX(-50%);color:#2c4a22">JULY</div><div class="t dt" style="left:238.9px;top:313.900px;transform:translateX(-50%);color:#2c4a22">AUGUST</div><div class="t dt" style="left:315.0px;top:313.900px;transform:translateX(-50%);color:#2c4a22">SEPTEMBER</div>
<div class="t dt" style="left:49.500px;top:332.300px;">Cars Sold</div><div class="t dt" style="left:127.9px;top:332.300px">$</div><div class="t dt" style="right:1003.1px;top:332.300px">300,000.00</div><div class="t dt" style="left:203.9px;top:332.300px;font-weight:bold">$</div><div class="t dt" style="right:927.1px;top:332.300px;font-weight:bold">200,000.00</div><div class="t dt" style="left:279.9px;top:332.300px">$</div><div class="t dt" style="right:850.9px;top:332.300px">300,000.00</div>
<div class="t dt" style="left:49.500px;top:346.5px;font-weight:bold">Spare Parts</div><div class="t dt" style="left:127.9px;top:346.5px">$</div><div class="t dt" style="right:1003.1px;top:346.5px">300,000.00</div><div class="t dt" style="left:203.9px;top:346.5px;font-weight:bold">$</div><div class="t dt" style="right:927.1px;top:346.5px;font-weight:bold">499,999.00</div><div class="t dt" style="left:279.9px;top:346.5px">$</div><div class="t dt" style="right:850.9px;top:346.5px">390,000.00</div>
<div class="t dt" style="left:49.500px;top:360.8px;font-weight:bold">Services</div><div class="t dt" style="left:127.9px;top:360.8px">$</div><div class="t dt" style="right:1003.1px;top:360.8px">25,000.00</div><div class="t dt" style="left:203.9px;top:360.8px;font-weight:bold">$</div><div class="t dt" style="right:927.1px;top:360.8px;font-weight:bold">40,000.00</div><div class="t dt" style="left:279.9px;top:360.8px">$</div><div class="t dt" style="right:850.9px;top:360.8px">38,000.00</div>
<div class="t dt" style="left:49.500px;top:374.800px;">Other</div><div class="t dt" style="left:127.9px;top:374.800px">$</div><div class="t dt" style="right:1003.1px;top:374.800px">60,000.00</div><div class="t dt" style="left:203.9px;top:374.800px;font-weight:bold">$</div><div class="t dt" style="right:927.1px;top:374.800px;font-weight:bold">65,000.00</div><div class="t dt" style="left:279.9px;top:374.800px">$</div><div class="t dt" style="right:850.9px;top:374.800px">70,000.00</div>
<div class="abs" style="left:374px;top:222px;width:259px;height:160px;background:#fff;border:1px solid #b4b4b4;border-radius:6px"></div>
<svg class="abs" style="left:374px;top:222px" width="259" height="160" viewBox="374 222 259 160">
<path d="M474.40 228.60A73.2 73.2 0 0 1 532.37 346.49L503.15 323.96A36.3 36.3 0 0 0 474.40 265.50Z" fill="#2d5016"/>
<path d="M532.37 346.49A73.2 73.2 0 0 1 431.96 361.44L453.36 331.38A36.3 36.3 0 0 0 503.15 323.96Z" fill="#c0504d"/>
<path d="M431.96 361.44A73.2 73.2 0 0 1 403.61 320.42L439.29 311.03A36.3 36.3 0 0 0 453.36 331.38Z" fill="#9bbb59"/>
<path d="M403.61 320.42A73.2 73.2 0 0 1 474.40 228.60L474.40 265.50A36.3 36.3 0 0 0 439.29 311.03Z" fill="#8064a2"/>
<rect x="577" y="284.7" width="3" height="3" fill="#2d5016"/><text x="581.500" y="287.8" font-size="5" font-family="Liberation Sans, sans-serif" fill="#333">Sales</text>
<rect x="577" y="294.7" width="3" height="3" fill="#c0504d"/><text x="581.500" y="297.8" font-size="5" font-family="Liberation Sans, sans-serif" fill="#333">Cost of Goods Sold</text>
<rect x="577" y="306.2" width="3" height="3" fill="#9bbb59"/><text x="581.500" y="309.3" font-size="5" font-family="Liberation Sans, sans-serif" fill="#333">Gross Profit/Loss</text>
<rect x="577" y="315.5" width="3" height="3" fill="#8064a2"/><text x="581.500" y="318.6" font-size="5" font-family="Liberation Sans, sans-serif" fill="#333">Expenses</text>
</svg>
<div class="abs" style="left:48.500px;top:393.500px;width:575.500px;height:186.500px;background:#fff;border:1px solid #c0c8bc;border-radius:6px"></div>
<svg class="abs" style="left:48px;top:393px" width="577" height="188" viewBox="48 393 577 188">
<path d="M104.2 552.2H527.0" stroke="#cfcfcf" stroke-width="0.800"/><path d="M104.2 530.4H527.0" stroke="#cfcfcf" stroke-width="0.800"/><path d="M104.2 508.7H527.0" stroke="#cfcfcf" stroke-width="0.800"/><path d="M104.2 486.9H527.0" stroke="#cfcfcf" stroke-width="0.800"/><path d="M104.2 465.2H527.0" stroke="#cfcfcf" stroke-width="0.800"/><path d="M104.2 443.4H527.0" stroke="#cfcfcf" stroke-width="0.800"/><path d="M104.2 421.7H527.0" stroke="#cfcfcf" stroke-width="0.800"/><path d="M104.2 399.9H527.0" stroke="#cfcfcf" stroke-width="0.800"/>
<path d="M104.2 465.2L245.1 422.7L386.1 541.0L527.0 529.6L527.0 537.5L386.1 545.1L245.1 465.2L104.2 497.8Z" fill="#829777" fill-opacity="0.550" stroke="#55704a" stroke-width="0.700"/>
<path d="M104.2 497.8L245.1 465.2L386.1 545.1L527.0 537.5L527.0 544.6L386.1 549.5L245.1 519.6L104.2 519.6Z" fill="#bcd8b0" fill-opacity="0.700" stroke="#44683a" stroke-width="0.700"/>
<path d="M104.2 519.6L245.1 519.6L386.1 549.5L527.0 544.6L527.0 552.2L386.1 552.2L245.1 552.2L104.2 552.2Z" fill="#a5c29a" fill-opacity="0.700" stroke="#7fae70" stroke-width="0.700"/>
<clipPath id="ac"><path d="M104.2 465.2L245.1 422.7L386.1 541.0L527.0 529.6L527.0 552.2L386.1 552.2L245.1 552.2L104.2 552.2Z"/></clipPath><g clip-path="url(#ac)"><path d="M104.2 530.4H527.0" stroke="#50644a" stroke-opacity="0.280" stroke-width="0.800"/><path d="M104.2 508.7H527.0" stroke="#50644a" stroke-opacity="0.280" stroke-width="0.800"/><path d="M104.2 486.9H527.0" stroke="#50644a" stroke-opacity="0.280" stroke-width="0.800"/><path d="M104.2 465.2H527.0" stroke="#50644a" stroke-opacity="0.280" stroke-width="0.800"/><path d="M104.2 443.4H527.0" stroke="#50644a" stroke-opacity="0.280" stroke-width="0.800"/><path d="M104.2 421.7H527.0" stroke="#50644a" stroke-opacity="0.280" stroke-width="0.800"/></g>
<path d="M104.2 399.9V552.2H527.0" stroke="#777" stroke-width="0.800" fill="none"/>
<g font-size="5.100" font-family="Liberation Sans, sans-serif" fill="#333"><text x="95.5" y="554.1" text-anchor="end">$-</text><text x="98.5" y="532.3" text-anchor="end">$200,000.00</text><text x="98.5" y="510.6" text-anchor="end">$400,000.00</text><text x="98.5" y="488.8" text-anchor="end">$600,000.00</text><text x="98.5" y="467.1" text-anchor="end">$800,000.00</text><text x="98.5" y="445.3" text-anchor="end">$1,000,000.00</text><text x="98.5" y="423.6" text-anchor="end">$1,200,000.00</text><text x="98.5" y="401.8" text-anchor="end">$1,400,000.00</text><text x="104.2" y="563" text-anchor="middle">Cars Sold</text><text x="245.1" y="563" text-anchor="middle">Spare Parts</text><text x="386.1" y="563" text-anchor="middle">Services</text><text x="527.0" y="563" text-anchor="middle">Other</text><text x="315.700" y="571.800" text-anchor="middle">Description</text><rect x="542.700" y="474.0" width="3.200" height="3.200" fill="#bac6b4" stroke="#6a8a5c" stroke-width="0.500"/><text x="546.800" y="477.9" font-size="4.650">COSTS OF GOODS SEPTEMBER</text><rect x="542.700" y="484.6" width="3.200" height="3.200" fill="#d0e4c8" stroke="#6a8a5c" stroke-width="0.500"/><text x="546.800" y="488.5" font-size="4.650">COSTS OF GOODS AUGUST</text><rect x="542.700" y="494.7" width="3.200" height="3.200" fill="#c0d4b8" stroke="#6a8a5c" stroke-width="0.500"/><text x="546.800" y="498.6" font-size="4.650">COSTS OF GOODS JULY</text></g>
</svg>
<!-- BOTTOM -->
<!-- VSCROLL -->
<div class="abs" style="left:1184px;top:153px;width:16px;height:448px;background:#e6e6e6;border-left:1px solid #c9c9c9"></div>
<div class="abs" style="left:1186.500px;top:155.500px;width:11.500px;height:12px;background:#fff;border:1px solid #d4d4d4"></div>
<div class="dd" style="left:1190px;top:160px;border-top:none;border-bottom:2.500px solid #555"></div>
<div class="abs" style="left:1186.500px;top:178.500px;width:11.500px;height:409px;background:#fff;border:1px solid #cfcfcf"></div>
<div class="abs" style="left:1186.500px;top:589px;width:11.500px;height:11px;background:#fff;border:1px solid #d4d4d4"></div>
<div class="dd" style="left:1190px;top:593.500px"></div>
<div id="tabsbar" class="abs"></div>
<div class="abs" style="left:65px;top:601px;width:70px;height:18px;background:#fff;border-bottom:2px solid #217346"></div>
<div class="tb" style="left:99px;top:604px;color:#217346;font-weight:bold;font-size:10px">Dashboard</div>
<div class="tb" style="left:170px;top:604.200px;font-size:10.300px;letter-spacing:-0.500px">QUARTER 1</div>
<div class="tb" style="left:243.500px;top:604.200px;font-size:10.300px;letter-spacing:-0.500px">QUARTER 2</div>
<div class="tb" style="left:316.500px;top:604.200px;font-size:10.300px;letter-spacing:-0.500px">QUARTER 3</div>
<div class="tb" style="left:389.500px;top:604.200px;font-size:10.300px;letter-spacing:-0.500px">QUARTER 4</div>
<div class="tb" style="left:447.500px;top:604px">Setup</div>
<div class="tb" style="left:507.500px;top:604px">Instructions</div>
<div class="tsep" style="left:207px"></div><div class="tsep" style="left:280px"></div><div class="tsep" style="left:353px"></div><div class="tsep" style="left:426px"></div><div class="tsep" style="left:470px"></div><div class="tsep" style="left:543px"></div>
<div class="dd" style="left:18px;top:607px;border:2.500px solid transparent;border-right:3px solid #c8c8c8;border-left:none"></div>
<div class="dd" style="left:36px;top:607px;border:2.500px solid transparent;border-left:3px solid #c8c8c8;border-right:none"></div>
<svg class="abs" style="left:564px;top:604px" width="13" height="13"><circle cx="6.500" cy="6.500" r="5.500" fill="none" stroke="#777" stroke-width="0.900"/><path d="M6.500 3.500v6M3.500 6.500h6" stroke="#777" stroke-width="0.900"/></svg>
<div class="abs" style="left:718px;top:605px;width:1px;height:1px;background:#999;box-shadow:0 3px 0 #999,0 6px 0 #999"></div>
<div class="abs" style="left:729px;top:605.500px;width:12px;height:11.500px;background:#fff;border:1px solid #cfcfcf"></div>
<div class="dd" style="left:733px;top:608px;border:2.500px solid transparent;border-right:3px solid #555;border-left:none"></div>
<div class="abs" style="left:742px;top:605.500px;width:413px;height:11.500px;background:#fff;border:1px solid #cfcfcf"></div>
<div class="abs" style="left:1173px;top:605.500px;width:12px;height:11.500px;background:#fff;border:1px solid #cfcfcf"></div>
<div class="dd" style="left:1178px;top:608px;border:2.500px solid transparent;border-left:3px solid #555;border-right:none"></div>
<div id="status" class="abs"></div>
<div class="rl" style="left:4.500px;top:625px;font-size:8px;color:#444">Ready</div>
<div class="rl" style="left:37px;top:625px;font-size:8px;color:#444">Calculate</div>
<svg class="abs" style="left:83px;top:624px" width="10" height="10"><rect x="0.500" y="0.500" width="9" height="8.500" fill="#fff" stroke="#555"/><rect x="0.500" y="0.500" width="9" height="2.500" fill="#555"/><path d="M2.500 5h1M4.500 5h1M6.500 5h1M2.500 7h1M4.500 7h1M6.500 7h1" stroke="#555"/></svg>
<div class="abs" style="left:990px;top:620px;width:26px;height:18px;background:#c8c8c8"></div>
<svg class="abs" style="left:997px;top:623px" width="70" height="12" viewBox="0 0 70 12"><g fill="none" stroke="#808080" stroke-width="0.900"><rect x="0.500" y="1.500" width="11" height="9"/><path d="M0.500 4.500h11M0.500 7.500h11M4.500 1.500v9M8.500 1.500v9"/><rect x="27.500" y="1.500" width="9" height="9"/><rect x="29.500" y="3.500" width="5" height="5"/><rect x="53.500" y="1.500" width="10" height="9"/><path d="M57.500 1.500v5h6"/></g></svg>
<div class="abs" style="left:1072px;top:628.500px;width:6px;height:1px;background:#444"></div>
<div class="abs" style="left:1082px;top:628.500px;width:76px;height:1px;background:#b0b0b0"></div>
<div class="abs" style="left:1119.500px;top:626px;width:1px;height:6px;background:#9a9a9a"></div>
<div class="abs" style="left:1100px;top:624px;width:3px;height:10px;background:#555"></div>
<div class="abs" style="left:1161px;top:628.500px;width:6px;height:1px;background:#444"></div><div class="abs" style="left:1163.500px;top:626px;width:1px;height:6px;background:#444"></div>
<div class="rl" style="left:1175px;top:625.500px;font-size:7.800px;color:#333">55%</div>
<!-- TASKBAR -->
<div id="taskbar" class="abs"></div>
<svg class="abs" style="left:380px;top:640px" width="440" height="35" viewBox="380 640 440 35">
  <!-- windows -->
  <defs>
    <linearGradient id="wg" x1="0" y1="0" x2="1" y2="1"><stop offset="0" stop-color="#55c8f4"/><stop offset="1" stop-color="#1478d4"/></linearGradient>
    <linearGradient id="tv" x1="0" y1="0" x2="1" y2="1"><stop offset="0" stop-color="#cfcfcf"/><stop offset="0.600" stop-color="#ffffff"/><stop offset="1" stop-color="#f4f4f4"/></linearGradient>
    <linearGradient id="cp" x1="0" y1="0" x2="1" y2="0.300"><stop offset="0" stop-color="#2a8cf0"/><stop offset="0.300" stop-color="#3ac8a8"/><stop offset="0.550" stop-color="#f5b030"/><stop offset="0.800" stop-color="#e8509a"/><stop offset="1" stop-color="#b060e0"/></linearGradient>
  </defs>
  <g fill="url(#wg)"><rect x="384" y="647.500" width="8.300" height="8.300" rx="0.800"/><rect x="393.300" y="647.500" width="8.300" height="8.300" rx="0.800"/><rect x="384" y="656.800" width="8.300" height="8.300" rx="0.800"/><rect x="393.300" y="656.800" width="8.300" height="8.300" rx="0.800"/></g>
  <!-- task view -->
  <rect x="419.500" y="651.500" width="13.500" height="13.500" rx="1.200" fill="#242424"/><rect x="425" y="647.500" width="12.500" height="12.500" rx="1" fill="url(#tv)"/>
  <!-- copilot -->
  <path d="M455 658c-1.500-4 0-9.500 3.500-10.500 2.500-.7 5 .3 6 2.500l1 2.500c.8 2 3.500 2.500 5.500.500 1 4.500-1 9.500-4.500 10.500-2.500.700-5-.300-6-2.500l-1-2.500c-.8-2-3-2.500-4.500-.500z" fill="url(#cp)"/>
  <path d="M463 654c1 2 1.200 4 .5 6" stroke="#fff" stroke-width="1.200" fill="none" opacity="0.700"/>
  <!-- power bi -->
  <rect x="488" y="647" width="19" height="18.500" fill="#2f6e68"/><rect x="490" y="655" width="7" height="10.500" fill="#e6b422"/><rect x="496.500" y="647" width="6" height="18.500" fill="#f5d24a"/><rect x="493" y="659" width="5" height="6.500" fill="#f2c811"/>
  <!-- edge -->
  <circle cx="532" cy="656" r="9" fill="#1c84d6"/><path d="M523.500 653c2-5 8-7 13-4 3 2 4 5 4 7h-9c0-2-2-3-4-3-2 0-3 0-4 0z" fill="#5fd0a0"/><path d="M526 662c2 3 7 4 11 2 2-1 3-2 4-4-3 2-8 1-9-3-2 1-5 3-6 5z" fill="#0c4a9a"/><circle cx="530.500" cy="660" r="3.200" fill="#e8d0b8"/>
  <rect x="529" y="670" width="6" height="1.500" rx="0.700" fill="#8a8a8a"/>
  <!-- round yellow/purple -->
  <circle cx="567" cy="656" r="8.500" fill="#f7b32a"/><path d="M567 647.500a8.500 8.500 0 0 1 8.500 8.500h-8.500z" fill="#b84ad0"/><circle cx="567" cy="656" r="5" fill="#fff"/><path d="M567 652.500l3 1.500v2.500c0 1.500-1.500 3-3 3.500-1.500-.5-3-2-3-3.500v-2.500z" fill="#6a3ad0"/>
  <!-- chrome -->
  <circle cx="600" cy="656" r="9" fill="#e8453c"/><path d="M600 656l-7.800 4.500a9 9 0 0 0 7.800 4.500l4-7z" fill="#34a853"/><path d="M600 656l4 7a9 9 0 0 0 4.800-9h-8.800z" fill="#fbbc05"/><circle cx="600" cy="656" r="4.200" fill="#fff"/><circle cx="600" cy="656" r="3.200" fill="#4285f4"/>
  <rect x="597" y="670" width="6" height="1.500" rx="0.700" fill="#8a8a8a"/>
  <!-- m365 copilot -->
  <defs><linearGradient id="m3" x1="0" y1="0" x2="1" y2="1"><stop offset="0" stop-color="#5a7ae8"/><stop offset="0.550" stop-color="#9a6ae0"/><stop offset="1" stop-color="#e08ad0"/></linearGradient></defs>
  <path d="M635.500 646.500l7.500 4.300v9.400l-7.500 4.300-7.500-4.300v-9.400z" fill="url(#m3)"/><path d="M635.500 652.500l3 1.700v3.600l-3 1.700-3-1.700v-3.600z" fill="#e8eef8"/><path d="M628 650.800l5 4M643 660.200l-5-4" stroke="#d6e6f0" stroke-width="1.200"/>
  <!-- facebook -->
  <circle cx="669.500" cy="656" r="9" fill="#1877f2"/><path d="M670.500 665v-7h2.300l.4-2.800h-2.700v-1.700c0-.8.300-1.400 1.500-1.400h1.300v-2.500c-.3 0-1.100-.1-2.100-.1-2.100 0-3.500 1.300-3.500 3.600v2.100h-2.300v2.800h2.300v7z" fill="#fff"/>
  <!-- whatsapp -->
  <circle cx="703" cy="657.500" r="7" fill="#e4f2ec" stroke="#3a9e74" stroke-width="2"/><path d="M695.500 666.500l1.200-4.500 3.300 2.800z" fill="#3a9e74"/>
  <path d="M700 654.500c0 3 3 6 6 6l.8-1.500-1.800-1-.8.700c-1-.4-2-1.400-2.400-2.400l.7-.8-1-1.800z" fill="#3a9e74"/>
  <circle cx="710.500" cy="649" r="5.800" fill="#2c8a86"/><text x="710.500" y="651.200" font-size="5.800" font-family="Liberation Sans, sans-serif" fill="#fff" text-anchor="middle">TV</text>
  <rect x="701" y="670" width="6" height="1.500" rx="0.700" fill="#8a8a8a"/>
  <!-- M -->
  <rect x="728.500" y="647" width="18" height="18" fill="#b5121b"/><text x="737.500" y="661" font-size="12.500" font-weight="bold" font-family="Liberation Sans, sans-serif" fill="#fff" text-anchor="middle">M</text>
  <!-- folder -->
  <path d="M763 649h6l2 2h10v13h-18z" fill="#f7c744"/><rect x="763" y="653" width="18" height="11" rx="1" fill="#fbd866"/><rect x="767" y="660" width="10" height="4" fill="#2a8ae0"/>
  <rect x="769" y="670" width="6" height="1.500" rx="0.700" fill="#8a8a8a"/>
  <!-- excel -->
  <rect x="804" y="648.500" width="11" height="15" fill="#fff" stroke="#1e7145" stroke-width="1"/><path d="M806 652h8M806 655h8M806 658h8M806 661h8M810 648.500v15" stroke="#1e7145" stroke-width="0.800"/><path d="M797 648.500l10-1.500v18l-10-1.500z" fill="#1e7145"/><text x="802" y="659.500" font-size="8.500" font-weight="bold" font-family="Liberation Sans, sans-serif" fill="#fff" text-anchor="middle">X</text>
  <rect x="803" y="670" width="6" height="1.500" rx="0.700" fill="#8a8a8a"/>
</svg>
<svg class="abs" style="left:1020px;top:645px" width="120" height="24" viewBox="1020 645 120 24">
  <path d="M1024.500 658.500l4-4 4 4" fill="none" stroke="#333" stroke-width="1.300"/>
  <g fill="none" stroke="#333" stroke-width="1.100"><path d="M1081.500 655a9 9 0 0 1 12 0"/><path d="M1083.500 657.300a6 6 0 0 1 8 0"/><path d="M1085.500 659.500a3 3 0 0 1 4 0"/></g><circle cx="1087.500" cy="661.200" r="0.900" fill="#333"/>
  <path d="M1100.500 654.500h2l3-2.500v9l-3-2.500h-2z" fill="none" stroke="#333" stroke-width="1"/><path d="M1107.500 654.500a3 3 0 0 1 0 4M1109.500 652.800a5.500 5.500 0 0 1 0 7.400M1111.500 651.300a8 8 0 0 1 0 10.400" fill="none" stroke="#333" stroke-width="0.900"/>
  <rect x="1119" y="652.500" width="11" height="7.500" rx="1.800" fill="none" stroke="#333" stroke-width="1.100"/><rect x="1120.500" y="654" width="3" height="4.500" fill="#333"/><rect x="1130.500" y="655" width="1.500" height="2.500" fill="#333"/>
</svg>
<div class="t" style="left:1058px;top:646.500px;transform:translateX(-50%);font-size:9px;color:#222">ENG</div>
<div class="t" style="left:1058px;top:658.500px;transform:translateX(-50%);font-size:9px;color:#222">UK</div>
<div class="t" dir="rtl" style="right:15.500px;top:645px;font-size:8.500px;color:#222;font-family:'Liberation Sans','DejaVu Sans',sans-serif">&#1632;&#1636;:&#1632;&#1632; &#1605;</div>
<div class="t" dir="ltr" style="right:15.500px;top:657.500px;font-size:8.500px;color:#222;font-family:'Liberation Sans','DejaVu Sans',sans-serif">&#1634;&#1632;&#1634;&#1637;/&#1632;&#1640;/&#1635;&#1632;</div>

</div></body></html>
